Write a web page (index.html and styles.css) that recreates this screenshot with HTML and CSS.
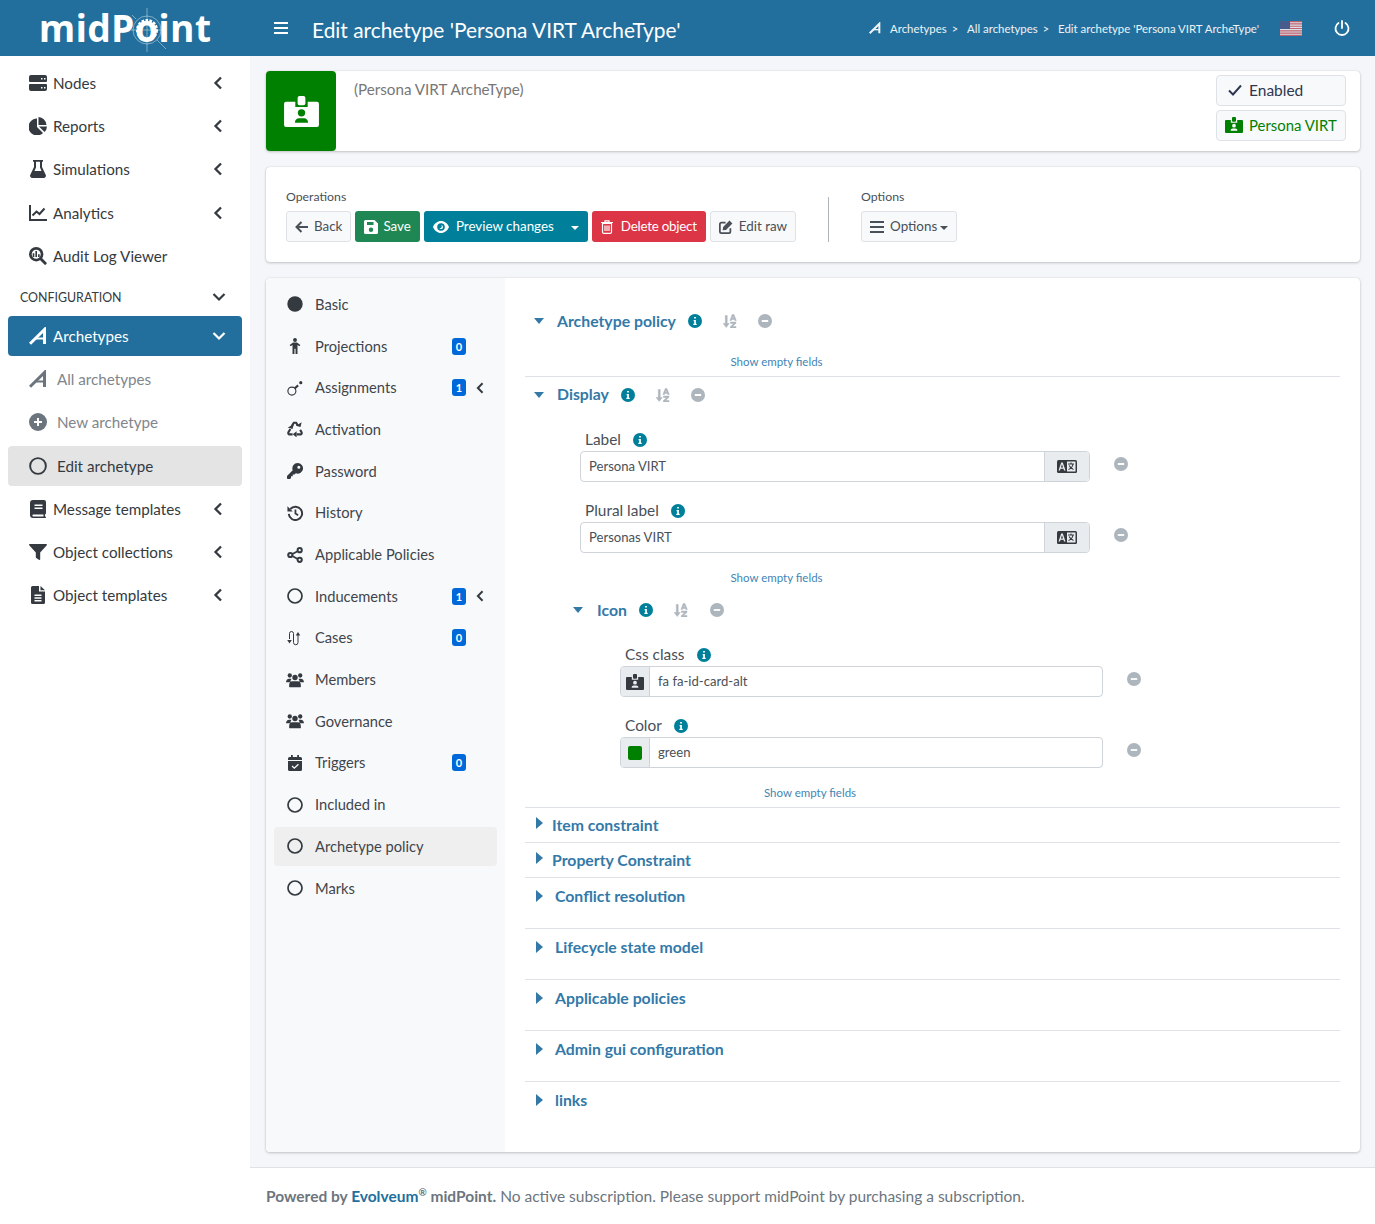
FILE: index.html
```html
<!DOCTYPE html>
<html lang="en">
<head>
  <meta charset="UTF-8" />
  <meta name="viewport" content="width=device-width, initial-scale=1.0">
  <title>Edit archetype</title>
  <link rel="stylesheet" href="styles.css">
</head>
<body>
  <svg class="sprite" xmlns="http://www.w3.org/2000/svg">
    <symbol id="i-server" viewBox="0 0 18 16"><path fill="currentColor" d="M2 0h14a2 2 0 0 1 2 2v4a1 1 0 0 1-1 1H1a1 1 0 0 1-1-1V2a2 2 0 0 1 2-2zm10 3v1.500h1.500V3zm3 0v1.500h1.500V3zM1 9h16a1 1 0 0 1 1 1v4a2 2 0 0 1-2 2H2a2 2 0 0 1-2-2v-4a1 1 0 0 1 1-1zm11 3v1.500h1.500V12zm3 0v1.500h1.500V12z"/></symbol>
    <symbol id="i-pie" viewBox="0 0 18 18"><path fill="currentColor" d="M8 1.500V10l6 6a8.500 8.500 0 1 1-6-14.500zM9.500 0a8.500 8.500 0 0 1 8 8h-8zM10 9.500h8a8 8 0 0 1-2.500 5.500z"/></symbol>
    <symbol id="i-flask" viewBox="0 0 16 18"><path fill="currentColor" d="M3 0h10v1.800h-1V7l3.700 7.700A2.300 2.300 0 0 1 13.600 18H2.400A2.300 2.300 0 0 1 .3 14.700L4 7V1.800H3zm3 1.800V7.500L4.500 11h7L10 7.500V1.800z"/></symbol>
    <symbol id="i-line" viewBox="0 0 18 16"><path fill="none" stroke="currentColor" stroke-width="2" d="M1 0v15h17"/><path fill="none" stroke="currentColor" stroke-width="2" d="M3.500 10.500l4-4 3 2.500 5-5.500"/></symbol>
    <symbol id="i-audit" viewBox="0 0 20 20"><circle cx="8" cy="8" r="6.500" fill="none" stroke="currentColor" stroke-width="3"/><path stroke="currentColor" stroke-width="3.200" stroke-linecap="round" d="M13 13l5 5"/><path stroke="currentColor" stroke-width="1.800" d="M5 7v4M8 4.500V11M11 8v3"/></symbol>
    <symbol id="i-arch" viewBox="0 0 18 18"><path fill="none" stroke="currentColor" stroke-width="3" d="M1 16.800L15.500 2.500V17"/><path fill="none" stroke="currentColor" stroke-width="2" d="M6.500 11.500h9"/></symbol>
    <symbol id="i-plus" viewBox="0 0 18 18"><circle cx="9" cy="9" r="9" fill="currentColor"/><path stroke="#fff" stroke-width="2" d="M9 5v8M5 9h8"/></symbol>
    <symbol id="i-ring" viewBox="0 0 16 16"><circle cx="8" cy="8" r="7" fill="none" stroke="currentColor" stroke-width="1.700"/></symbol>
    <symbol id="i-dot" viewBox="0 0 16 16"><circle cx="8" cy="8" r="7.700" fill="currentColor"/></symbol>
    <symbol id="i-book" viewBox="0 0 16 18"><path fill="currentColor" d="M3 0h11a2 2 0 0 1 2 2v11c0 .8-.5 1.300-1 1.500v1.700c.6.200 1 .7 1 1.300a.500.500 0 0 1-.500.500H3a3 3 0 0 1-3-3V3a3 3 0 0 1 3-3zm1.500 4.500v1.500h8V4.500zm0 3v1.500h8V7.500zM3 14.500a1.300 1.300 0 0 0 0 2h10.500v-2z"/></symbol>
    <symbol id="i-filter" viewBox="0 0 18 16"><path fill="currentColor" d="M.8 0h16.400c.7 0 1 .8.600 1.300L11.200 8.500V15c0 .8-.8 1.200-1.400.8L7.300 14c-.3-.2-.5-.5-.5-.8V8.500L.2 1.300C-.2.800.1 0 .8 0z"/></symbol>
    <symbol id="i-file" viewBox="0 0 14 18"><path fill="currentColor" d="M1.500 0H8v5.500h6v11a1.500 1.500 0 0 1-1.500 1.500h-11A1.500 1.500 0 0 1 0 16.500v-15A1.500 1.500 0 0 1 1.500 0zM9.500 0L14 4.200H9.500zM3.500 8.500V10h7V8.500zm0 2.800v1.500h7v-1.500zm0 2.800v1.500h7v-1.500z"/></symbol>
    <symbol id="i-badge" viewBox="0 0 18 16"><path fill="currentColor" fill-rule="evenodd" d="M1 3h16a1 1 0 0 1 1 1v11a1 1 0 0 1-1 1H1a1 1 0 0 1-1-1V4a1 1 0 0 1 1-1zm4.800 0v2.700h6.400V3zM9 6.800a1.900 1.900 0 1 0 0 3.800 1.900 1.900 0 0 0 0-3.800zM5.600 13.800h6.800c0-1.400-1-2.300-2-2.300H7.600c-1 0-2 .9-2 2.300z"/><rect x="7" y="0" width="4" height="4.800" rx="1" fill="currentColor"/></symbol>
    <symbol id="i-person" viewBox="0 0 12 18"><circle cx="6" cy="2.200" r="2.200" fill="currentColor"/><path fill="currentColor" d="M3.800 5h4.400l3.800 3-1 1.200-2.200-1.400V18H6.600v-6H5.400v6H3.200V7.800L1 9.200 0 8z"/></symbol>
    <symbol id="i-assign" viewBox="0 0 18 18"><circle cx="5.500" cy="12.500" r="4.500" fill="none" stroke="currentColor" stroke-width="1.300"/><path stroke="currentColor" stroke-width="2.400" d="M8.500 9.500l4-3.500"/><circle cx="15.500" cy="3" r="1.800" fill="currentColor"/></symbol>
    <symbol id="i-recycle" viewBox="0 0 18 18"><path fill="none" stroke="currentColor" stroke-width="2.400" d="M5.300 5.800L7.700 2h2.600l1.600 2.600M3.800 9L1.600 12.700c-.6 1.100.1 2.300 1.300 2.300h3.400M10.800 15h4.300c1.200 0 1.900-1.200 1.300-2.300l-1.600-2.700"/><path fill="currentColor" d="M9.800 5.300l5.400 1.500 1.300-5.300zM.8 7.300l5.400 1.600L7.700 3.600zM10.800 11.500v7L6.500 15z"/></symbol>
    <symbol id="i-key" viewBox="0 0 18 18"><path fill="currentColor" fill-rule="evenodd" d="M12 0a6 6 0 1 1-2.100 11.600L8.500 13H6.500v2h-2v2l-1 1H.8a.8.800 0 0 1-.8-.8v-2.600l6.400-6.500A6 6 0 0 1 12 0zm1.300 3a1.700 1.700 0 1 0 0 3.400 1.700 1.700 0 0 0 0-3.400z"/></symbol>
    <symbol id="i-history" viewBox="0 0 18 18"><path fill="none" stroke="currentColor" stroke-width="2.200" d="M3.800 4.500A7.500 7.500 0 1 1 2 10"/><path fill="currentColor" d="M.5 1.500L6.500 7.300H.5z"/><path fill="none" stroke="currentColor" stroke-width="2" d="M9.500 5v4.500l3 2"/></symbol>
    <symbol id="i-share" viewBox="0 0 16 16"><path stroke="currentColor" stroke-width="1.800" d="M3.500 8l9-4.800M3.500 8l9 5"/><circle cx="3.300" cy="8" r="2.100" fill="#f8f9fa" stroke="currentColor" stroke-width="2"/><circle cx="12.700" cy="3.200" r="2.100" fill="#f8f9fa" stroke="currentColor" stroke-width="2"/><circle cx="12.700" cy="12.800" r="2.100" fill="#f8f9fa" stroke="currentColor" stroke-width="2"/></symbol>
    <symbol id="i-cases" viewBox="0 0 16 16"><path fill="none" stroke="currentColor" stroke-width="1" d="M2.500 9V3.500a2 2 0 0 1 4 0v9a2.200 2.200 0 0 0 4.500 0V5"/><path fill="currentColor" d="M.2 10h4.600l-2.300 3.500zM8.700 5.500h4.600L11 2z"/></symbol>
    <symbol id="i-users" viewBox="0 0 20 16"><circle cx="4.200" cy="3" r="2.400" fill="currentColor"/><circle cx="15.800" cy="3" r="2.400" fill="currentColor"/><circle cx="10" cy="5.200" r="3" fill="currentColor"/><path fill="currentColor" d="M0 10.500C0 8.200 1.500 6.500 3.500 6.500H5c.4 0 .8.100 1 .3a5 5 0 0 0-1 3.700H1zM15 10.500a5 5 0 0 0-1-3.700c.3-.2.700-.3 1-.3h1.500c2 0 3.500 1.700 3.500 4H15zM7 9.500h6c2 0 3.500 1.800 3.500 4v2c0 .3-.2.500-.5.500H4c-.3 0-.5-.2-.5-.5v-2c0-2.200 1.500-4 3.500-4z"/></symbol>
    <symbol id="i-cal" viewBox="0 0 14 16"><path fill="currentColor" fill-rule="evenodd" d="M3 0h1.800v2h4.400V0H11v2h1.500A1.500 1.500 0 0 1 14 3.500V5H0V3.500A1.500 1.500 0 0 1 1.500 2H3zM0 6h14v8.500a1.500 1.500 0 0 1-1.500 1.500h-11A1.500 1.500 0 0 1 0 14.500zm10 2.800L6.300 12.300 4.500 10.600l-.9.900 2.700 2.600 4.600-4.400z"/></symbol>
    <symbol id="i-left" viewBox="0 0 14 14"><path fill="none" stroke="currentColor" stroke-width="2" d="M13 7H2M6.500 2L1.500 7l5 5"/></symbol>
    <symbol id="i-save" viewBox="0 0 14 14"><path fill="currentColor" fill-rule="evenodd" d="M1.500 0h9L14 3.500V12.500a1.500 1.500 0 0 1-1.500 1.500h-11A1.500 1.500 0 0 1 0 12.500v-11A1.500 1.500 0 0 1 1.500 0zM3 2v3h6.500V2zm4 5.500a2.200 2.200 0 1 0 0 4.400 2.200 2.200 0 0 0 0-4.400z"/></symbol>
    <symbol id="i-eye" viewBox="0 0 16 12"><path fill="currentColor" fill-rule="evenodd" d="M8 0c3.600 0 6.600 2.400 8 6-1.400 3.600-4.400 6-8 6S1.400 9.600 0 6c1.400-3.600 4.400-6 8-6zm0 2.200a3.800 3.800 0 1 0 0 7.600 3.800 3.800 0 0 0 0-7.600zM8 4a2 2 0 1 1-1.800 2.900A1.500 1.500 0 0 0 8 4z"/></symbol>
    <symbol id="i-trash" viewBox="0 0 12 14"><path fill="none" stroke="currentColor" stroke-width="1.200" d="M1.500 3.500h9V12a1.300 1.300 0 0 1-1.300 1.300H2.800A1.300 1.300 0 0 1 1.500 12zM0 2.500h12M4 2.300V.8h4v1.500M4 5.500v5.500M6 5.500v5.500M8 5.500v5.500"/></symbol>
    <symbol id="i-edit" viewBox="0 0 16 16"><path fill="none" stroke="currentColor" stroke-width="2" d="M13 9.500v4a1.500 1.500 0 0 1-1.500 1.500h-9A1.500 1.500 0 0 1 1 13.500v-9A1.500 1.500 0 0 1 2.500 3h5"/><path fill="currentColor" d="M12 .7l3.300 3.300L8 11.300l-3.800.5.500-3.800z"/></symbol>
    <symbol id="i-bars" viewBox="0 0 14 12"><path stroke="currentColor" stroke-width="1.800" d="M0 1h14M0 6h14M0 11h14"/></symbol>
    <symbol id="i-check" viewBox="0 0 14 12"><path fill="none" stroke="currentColor" stroke-width="1.900" d="M1 6.500l4 4 8-9"/></symbol>
    <symbol id="i-info" viewBox="0 0 14 14"><circle cx="7" cy="7" r="7" fill="#007f9b"/><path fill="#fff" d="M6.100 2.900h1.800v1.600H6.100zM5.600 6h2.300v3.700h.8V11H5.300V9.700h.9V7.300h-.6z"/></symbol>
    <symbol id="i-minus" viewBox="0 0 14 14"><circle cx="7" cy="7" r="7" fill="#adb5bd"/><path stroke="#fff" stroke-width="1.800" d="M3.800 7h6.400"/></symbol>
    <symbol id="i-sort" viewBox="0 0 14 14"><path fill="#adb5bd" stroke="#adb5bd" stroke-width=".5" d="M2.300 1.500h1.900v8H6.200L3.200 13.500 .2 9.500h2.100zM9.300 0.500h1.600L13.300 6.500h-1.500l-.4-1H8.800l-.4 1H6.900zM9.300 4.300h1.600l-.8-2zM7.500 8h5.500v1.300l-3.500 3.200H13V14H7.300v-1.300l3.500-3.200H7.500z"/></symbol>
    <symbol id="i-lang" viewBox="0 0 20 13"><rect width="20" height="13" rx="1.500" fill="currentColor"/><rect x="10" y="1.500" width="8.500" height="10" fill="#e9ecef"/><path fill="#e9ecef" d="M4.200 2.500h1.600l2.700 8H7l-.5-1.700H3.500L3 10.500H1.500zM3.900 7.500h2.200L5 4.300z"/><path fill="none" stroke="currentColor" stroke-width="1.100" d="M11 4h6M14 2.500V4M16 4c-.5 3-2.500 4.800-4.500 5.500M12.200 5.500c.7 1.800 2.300 3.300 4.300 4"/></symbol>
    <symbol id="i-power" viewBox="0 0 16 16"><path fill="none" stroke="currentColor" stroke-width="1.800" stroke-linecap="round" d="M8 1v7M4.500 3A6.500 6.500 0 1 0 11.500 3"/></symbol>
  </svg>

  <header class="topbar">
    <div class="brand">
      <span class="brand-text">midPoint</span>
      <svg class="brand-gear" viewBox="0 0 48 48">
        <circle cx="24" cy="24" r="9" fill="none" stroke="#fff" stroke-width="4" stroke-dasharray="2.500 1.200"/>
        <circle cx="24" cy="24" r="14" fill="none" stroke="#fff" stroke-width=".6" opacity=".7"/>
        <path stroke="#fff" stroke-width=".6" opacity=".7" d="M24 2v44M8 24h32M34 34l9 9M13 13l-4-4"/>
      </svg>
    </div>
    <svg class="burger"><use href="#i-bars"/></svg>
    <h1 class="page-title">Edit archetype 'Persona VIRT ArcheType'</h1>
    <nav class="crumbs">
      <svg class="crumb-icon"><use href="#i-arch"/></svg>
      <span>Archetypes</span><span class="crumb-sep">&gt;</span>
      <span>All archetypes</span><span class="crumb-sep">&gt;</span>
      <span>Edit archetype 'Persona VIRT ArcheType'</span>
    </nav>
    <svg class="flag" viewBox="0 0 22 15">
      <rect width="22" height="15" fill="#e6e6ea"/>
      <path stroke="#c9616d" stroke-width="1.150" d="M0 .6h22M0 2.900h22M0 5.200h22M0 7.500h22M0 9.800h22M0 12.100h22M0 14.400h22"/>
      <rect width="10" height="8" fill="#4a5a8c"/>
    </svg>
    <svg class="power"><use href="#i-power"/></svg>
  </header>

  <div class="wrap">
    <aside class="sidebar">
      <a class="nav-item"><svg class="nav-icon"><use href="#i-server"/></svg><span class="nav-text">Nodes</span><svg class="chev" viewBox="0 0 10 14"><path d="M8 1.500L2.500 7 8 12.500"/></svg></a>
      <a class="nav-item"><svg class="nav-icon"><use href="#i-pie"/></svg><span class="nav-text">Reports</span><svg class="chev" viewBox="0 0 10 14"><path d="M8 1.500L2.500 7 8 12.500"/></svg></a>
      <a class="nav-item"><svg class="nav-icon"><use href="#i-flask"/></svg><span class="nav-text">Simulations</span><svg class="chev" viewBox="0 0 10 14"><path d="M8 1.500L2.500 7 8 12.500"/></svg></a>
      <a class="nav-item"><svg class="nav-icon"><use href="#i-line"/></svg><span class="nav-text">Analytics</span><svg class="chev" viewBox="0 0 10 14"><path d="M8 1.500L2.500 7 8 12.500"/></svg></a>
      <a class="nav-item"><svg class="nav-icon"><use href="#i-audit"/></svg><span class="nav-text">Audit Log Viewer</span></a>
      <div class="nav-header"><span>CONFIGURATION</span><svg class="chev-down" viewBox="0 0 14 10"><path d="M1.500 2L7 7.500 12.500 2"/></svg></div>
      <a class="nav-item active"><svg class="nav-icon"><use href="#i-arch"/></svg><span class="nav-text">Archetypes</span><svg class="chev-down" viewBox="0 0 14 10"><path d="M1.500 2L7 7.500 12.500 2"/></svg></a>
      <a class="nav-item sub muted"><svg class="nav-icon"><use href="#i-arch"/></svg><span class="nav-text">All archetypes</span></a>
      <a class="nav-item sub muted"><svg class="nav-icon"><use href="#i-plus"/></svg><span class="nav-text">New archetype</span></a>
      <a class="nav-item sub current"><svg class="nav-icon"><use href="#i-ring"/></svg><span class="nav-text">Edit archetype</span></a>
      <a class="nav-item"><svg class="nav-icon"><use href="#i-book"/></svg><span class="nav-text">Message templates</span><svg class="chev" viewBox="0 0 10 14"><path d="M8 1.500L2.500 7 8 12.500"/></svg></a>
      <a class="nav-item"><svg class="nav-icon"><use href="#i-filter"/></svg><span class="nav-text">Object collections</span><svg class="chev" viewBox="0 0 10 14"><path d="M8 1.500L2.500 7 8 12.500"/></svg></a>
      <a class="nav-item"><svg class="nav-icon"><use href="#i-file"/></svg><span class="nav-text">Object templates</span><svg class="chev" viewBox="0 0 10 14"><path d="M8 1.500L2.500 7 8 12.500"/></svg></a>
    </aside>

    <div class="main">
      <main class="content">
        <section class="card summary">
          <div class="summary-icon"><svg class="summary-badge"><use href="#i-badge"/></svg></div>
          <div class="summary-name">(Persona VIRT ArcheType)</div>
          <div class="summary-tags">
            <div class="tag"><svg class="tag-icon"><use href="#i-check"/></svg>Enabled</div>
            <div class="tag tag-green"><svg class="tag-icon tag-badge"><use href="#i-badge"/></svg>Persona VIRT</div>
          </div>
        </section>

        <section class="card ops">
          <div class="ops-group">
            <div class="ops-label">Operations</div>
            <div class="ops-buttons">
              <button class="btn btn-light"><svg class="btn-icon"><use href="#i-left"/></svg>Back</button>
              <button class="btn btn-green"><svg class="btn-icon"><use href="#i-save"/></svg>Save</button>
              <button class="btn btn-teal"><svg class="btn-icon btn-eye"><use href="#i-eye"/></svg>Preview changes<span class="caret-down"></span></button>
              <button class="btn btn-red"><svg class="btn-icon"><use href="#i-trash"/></svg>Delete object</button>
              <button class="btn btn-light"><svg class="btn-icon"><use href="#i-edit"/></svg>Edit raw</button>
            </div>
          </div>
          <div class="ops-divider"></div>
          <div class="ops-group">
            <div class="ops-label">Options</div>
            <div class="ops-buttons">
              <button class="btn btn-light"><svg class="btn-icon"><use href="#i-bars"/></svg>Options<span class="caret-small"></span></button>
            </div>
          </div>
        </section>

        <section class="card detail">
          <ul class="tabs">
            <li class="tab"><svg class="tab-icon"><use href="#i-dot"/></svg><span class="tab-text">Basic</span></li>
            <li class="tab"><svg class="tab-icon"><use href="#i-person"/></svg><span class="tab-text">Projections</span><span class="count">0</span></li>
            <li class="tab"><svg class="tab-icon"><use href="#i-assign"/></svg><span class="tab-text">Assignments</span><span class="count">1</span><svg class="tab-chev" viewBox="0 0 10 14"><path d="M8 1.500L2.500 7 8 12.500"/></svg></li>
            <li class="tab"><svg class="tab-icon"><use href="#i-recycle"/></svg><span class="tab-text">Activation</span></li>
            <li class="tab"><svg class="tab-icon"><use href="#i-key"/></svg><span class="tab-text">Password</span></li>
            <li class="tab"><svg class="tab-icon"><use href="#i-history"/></svg><span class="tab-text">History</span></li>
            <li class="tab"><svg class="tab-icon"><use href="#i-share"/></svg><span class="tab-text">Applicable Policies</span></li>
            <li class="tab"><svg class="tab-icon"><use href="#i-ring"/></svg><span class="tab-text">Inducements</span><span class="count">1</span><svg class="tab-chev" viewBox="0 0 10 14"><path d="M8 1.500L2.500 7 8 12.500"/></svg></li>
            <li class="tab"><svg class="tab-icon"><use href="#i-cases"/></svg><span class="tab-text">Cases</span><span class="count">0</span></li>
            <li class="tab"><svg class="tab-icon"><use href="#i-users"/></svg><span class="tab-text">Members</span></li>
            <li class="tab"><svg class="tab-icon"><use href="#i-users"/></svg><span class="tab-text">Governance</span></li>
            <li class="tab"><svg class="tab-icon"><use href="#i-cal"/></svg><span class="tab-text">Triggers</span><span class="count">0</span></li>
            <li class="tab"><svg class="tab-icon"><use href="#i-ring"/></svg><span class="tab-text">Included in</span></li>
            <li class="tab selected"><svg class="tab-icon"><use href="#i-ring"/></svg><span class="tab-text">Archetype policy</span></li>
            <li class="tab"><svg class="tab-icon"><use href="#i-ring"/></svg><span class="tab-text">Marks</span></li>
          </ul>

          <div class="form">
            <div class="sec-head first">
              <span class="tri-down"></span><span class="sec-title">Archetype policy</span>
              <svg class="sec-info"><use href="#i-info"/></svg><svg class="sec-tool"><use href="#i-sort"/></svg><svg class="sec-tool"><use href="#i-minus"/></svg>
            </div>
            <a class="show-empty top">Show empty fields</a>

            <div class="sec-head display">
              <span class="tri-down"></span><span class="sec-title">Display</span>
              <svg class="sec-info"><use href="#i-info"/></svg><svg class="sec-tool"><use href="#i-sort"/></svg><svg class="sec-tool"><use href="#i-minus"/></svg>
            </div>

            <div class="fields">
              <div class="field">
                <div class="field-label">Label<svg class="field-info"><use href="#i-info"/></svg></div>
                <div class="field-row">
                  <div class="input-group wide">
                    <div class="input-value">Persona VIRT</div>
                    <div class="addon addon-lang"><svg class="lang"><use href="#i-lang"/></svg></div>
                  </div>
                  <svg class="field-minus"><use href="#i-minus"/></svg>
                </div>
              </div>
              <div class="field">
                <div class="field-label">Plural label<svg class="field-info"><use href="#i-info"/></svg></div>
                <div class="field-row">
                  <div class="input-group wide">
                    <div class="input-value">Personas VIRT</div>
                    <div class="addon addon-lang"><svg class="lang"><use href="#i-lang"/></svg></div>
                  </div>
                  <svg class="field-minus"><use href="#i-minus"/></svg>
                </div>
              </div>
            </div>
            <a class="show-empty top mid">Show empty fields</a>

            <div class="sec-head nested">
              <span class="tri-down"></span><span class="sec-title">Icon</span>
              <svg class="sec-info"><use href="#i-info"/></svg><svg class="sec-tool"><use href="#i-sort"/></svg><svg class="sec-tool"><use href="#i-minus"/></svg>
            </div>

            <div class="fields inner">
              <div class="field">
                <div class="field-label">Css class<svg class="field-info"><use href="#i-info"/></svg></div>
                <div class="field-row">
                  <div class="input-group narrow">
                    <div class="addon addon-pre"><svg class="pre-badge"><use href="#i-badge"/></svg></div>
                    <div class="input-value">fa fa-id-card-alt</div>
                  </div>
                  <svg class="field-minus"><use href="#i-minus"/></svg>
                </div>
              </div>
              <div class="field">
                <div class="field-label">Color<svg class="field-info"><use href="#i-info"/></svg></div>
                <div class="field-row">
                  <div class="input-group narrow">
                    <div class="addon addon-pre"><span class="swatch"></span></div>
                    <div class="input-value">green</div>
                  </div>
                  <svg class="field-minus"><use href="#i-minus"/></svg>
                </div>
              </div>
            </div>
            <a class="show-empty inner-show">Show empty fields</a>

            <div class="fold small"><span class="tri-right"></span><span class="sec-title">Item constraint</span></div>
            <div class="fold small"><span class="tri-right"></span><span class="sec-title">Property Constraint</span></div>
            <div class="fold"><span class="tri-right"></span><span class="sec-title">Conflict resolution</span></div>
            <div class="fold"><span class="tri-right"></span><span class="sec-title">Lifecycle state model</span></div>
            <div class="fold"><span class="tri-right"></span><span class="sec-title">Applicable policies</span></div>
            <div class="fold"><span class="tri-right"></span><span class="sec-title">Admin gui configuration</span></div>
            <div class="fold"><span class="tri-right"></span><span class="sec-title">links</span></div>
          </div>
        </section>
      </main>
      <footer class="footer"><strong>Powered by <a class="footer-link">Evolveum</a><sup>®</sup> midPoint.</strong> No active subscription. Please support midPoint by purchasing a subscription.</footer>
    </div>
  </div>
</body>
</html>
```

FILE: styles.css
```css
* { box-sizing: border-box; }
body { margin: 0; font-family: Lato, "Noto Sans", sans-serif; font-size: 15.2px; color: #343a40; background: #f4f6f9; height: 1224px; overflow: hidden; }
svg { flex: none; }
.sprite { display: none; }

/* top bar */
.topbar { display: flex; align-items: center; height: 56px; background: #226f9d; color: #fff; }
.brand { position: relative; width: 250px; padding-left: 39px; flex: none; height: 56px; }
.brand-text { display: block; font-family: "Noto Sans", sans-serif; font-weight: 700; font-size: 37px; line-height: 56px; letter-spacing: .6px; }
.brand-gear { position: absolute; left: 123px; top: 6px; width: 48px; height: 48px; }
.burger { width: 14px; height: 12px; margin-left: 24px; }
.page-title { margin: 2px 0 0 24px; font-size: 20.9px; font-weight: 400; }
.crumbs { display: flex; align-items: center; margin-left: auto; font-size: 11.4px; color: #eef3f7; }
.crumb-icon { width: 12px; height: 12px; margin-right: 9px; }
.crumb-sep { margin: 0 9px 0 5px; font-size: 11px; }
.flag { width: 22px; height: 15px; margin-left: 21px; opacity: .95; }
.power { width: 16px; height: 16px; margin: 0 25px 0 32px; }

/* sidebar */
.wrap { display: flex; height: 1168px; }
.sidebar { width: 250px; flex: none; padding: 7px 8px 0; background: #fff; }
.nav-item { display: flex; align-items: center; height: 40px; margin-bottom: 3.2px; padding-left: 21px; border-radius: 4px; }
.nav-icon { width: 18px; height: 18px; margin-right: 6px; color: #343a40; }
.nav-text { flex: 1; }
.chev { width: 10px; height: 14px; margin-right: 19px; fill: none; stroke: #343a40; stroke-width: 2.300; }
.chev-down { width: 14px; height: 10px; margin-right: 16px; fill: none; stroke: currentColor; stroke-width: 2.200; }
.nav-header { display: flex; align-items: center; justify-content: space-between; height: 37px; padding: 0 0 0 12px; font-size: 12.4px; margin-bottom: 0; }
.nav-item.active { background: #226f9d; color: #fff; }
.active .nav-icon { color: #fff; }
.sub .nav-icon { margin-right: 10px; }
.muted { color: #80868c; }
.muted .nav-icon { color: #6c757d; }
.current { background: #e4e4e4; }

/* cards */
.main { flex: 1; display: flex; flex-direction: column; min-width: 0; }
.content { flex: 1; padding: 15px 15px 0 16px; }
.card { background: #fff; border-radius: 4px; box-shadow: 0 0 1px rgba(0,0,0,.2), 0 1px 3px rgba(0,0,0,.2); }
.summary { display: flex; height: 80px; margin-bottom: 16px; }
.summary-icon { display: flex; align-items: center; justify-content: center; width: 70px; background: #008000; border-radius: 4px; }
.summary-badge { width: 35px; height: 31px; color: #fff; }
.summary-name { flex: 1; padding: 9px 18px; color: #777; }
.summary-tags { display: flex; flex-direction: column; gap: 4px; padding: 4px 14px 0 0; }
.tag { display: flex; align-items: center; width: 130px; height: 31px; padding: 0 0 2px 11px; background: #f8f9fa; border: 1px solid #dee2e6; border-radius: 4px; font-size: 15.5px; color: #2e3650; }
.tag-icon { width: 14px; height: 12px; margin-right: 7px; }
.tag-green { color: #008000; padding-left: 8px; font-size: 14.9px; }
.tag-badge { width: 18px; height: 16px; margin-right: 6px; }

.ops { display: flex; align-items: flex-start; height: 95px; padding: 21px 20px 0; margin-bottom: 16px; }
.ops-label { font-size: 12.3px; line-height: 17px; margin-bottom: 6px; color: #495057; }
.ops-buttons { display: flex; gap: 4px; }
.ops-divider { width: 1px; height: 45px; margin: 9px 32px 0; background: #adb5bd; }
.btn { display: flex; align-items: center; height: 31px; padding: 0 8px 2px; border: 1px solid transparent; border-radius: 3px; font: inherit; font-size: 13.4px; color: #fff; }
.btn-icon { width: 14px; height: 14px; margin-right: 5px; margin-top: 2px; }
.btn-light { background: #f8f9fa; border-color: #dee2e6; color: #495057; }
.btn-light:last-child .btn-icon { margin-right: 6px; }
.btn-green { background: #1e8754; }
.btn-teal { background: #007f9b; }
.btn-red { background: #dc3545; letter-spacing: -.25px; }
.btn-red .btn-icon { width: 12px; margin-right: 8px; }
.btn-eye { width: 16px; height: 12px; margin-right: 7px; }
.caret-down { margin: 4px 0 0 17px; border: 4.5px solid transparent; border-top-color: #fff; border-bottom: 0; }
.caret-small { margin: 4px 0 0 3px; border: 4px solid transparent; border-top-color: #495057; border-bottom: 0; }

/* tabs column */
.detail { display: flex; height: 874px; overflow: hidden; }
.tabs { display: flex; flex-direction: column; gap: 2.7px; width: 239px; flex: none; margin: 0; padding: 6.9px 8px 0; list-style: none; background: #f8f9fa; }
.tab { display: flex; align-items: center; height: 39px; padding-left: 12px; border-radius: 4px; font-size: 14.7px; color: #3f454c; }
.tab-icon { width: 18px; height: 16px; margin-right: 11px; color: #343a40; }
.tab-text { width: 137px; flex: none; padding-bottom: 1px; }
.selected { background: #efefef; }
.count { display: flex; align-items: center; justify-content: center; width: 14px; height: 17px; background: #0069d9; border-radius: 3px; color: #fff; font-size: 11px; font-weight: 700; }
.tab-chev { width: 10px; height: 12px; margin-left: 9px; fill: none; stroke: #343a40; stroke-width: 2.300; }

/* form column */
.form { flex: 1; padding: 31px 20px 0; }
.sec-head { display: flex; align-items: center; height: 24px; padding-left: 9px; }
.sec-title { font-weight: 700; font-size: 15.8px; color: #3379a8; padding-bottom: 2px; }
.tri-down { width: 0; height: 0; margin-right: 13px; border: 5.5px solid transparent; border-top: 6px solid #3379a8; border-bottom: 0; }
.tri-right { width: 0; height: 0; margin-right: 12px; border: 6px solid transparent; border-left: 7px solid #3379a8; border-right: 0; }
.sec-info { width: 14px; height: 14px; margin-left: 12px; }
.sec-tool { width: 14px; height: 14px; margin-left: 21px; }
.show-empty { display: block; font-size: 11.5px; line-height: 16px; color: #3f86b5; text-align: center; }
.show-empty.top { width: 503px; margin-top: 21px; padding-bottom: 6px; }
.show-empty.mid { margin-top: 17px; padding-bottom: 0; }
.inner-show { width: 570px; margin-top: 17px; }
.display { margin-top: 0; border-top: 1px solid #dee2e6; height: 36px; padding-top: 0; }
.nested { margin-top: 12px; padding-left: 48px; }
.nested .sec-title { margin-left: 1px; }
.nested .sec-tool:last-child { margin-left: 22px; }
.fields { padding-left: 55px; margin-top: 18px; }
.inner { padding-left: 95px; margin-top: 23px; }
.field { margin-bottom: 19px; }
.field:last-child { margin-bottom: 0; }
.field-label { display: flex; align-items: center; height: 20px; margin-bottom: 1px; padding: 0 0 2px 5px; font-size: 15.4px; color: #495057; }
.field-info { width: 14px; height: 14px; margin: 2px 0 0 12px; }
.field-row { display: flex; align-items: center; }
.input-group { display: flex; height: 31px; border: 1px solid #ced4da; border-radius: 4px; overflow: hidden; background: #fff; }
.wide { width: 510px; }
.narrow { width: 483px; }
.input-value { flex: 1; padding-left: 8px; font-size: 13.1px; line-height: 29px; color: #495057; }
.addon { display: flex; align-items: center; justify-content: center; background: #e9ecef; }
.addon-lang { width: 45px; border-left: 1px solid #ced4da; color: #343a40; }
.addon-pre { width: 29px; border-right: 1px solid #ced4da; color: #343a40; }
.lang { width: 20px; height: 13px; }
.pre-badge { width: 18px; height: 16px; }
.swatch { width: 14px; height: 14px; background: #008000; border-radius: 2px; }
.field-minus { width: 14px; height: 14px; margin-left: 24px; position: relative; top: -3px; }
.fold { display: flex; align-items: flex-start; height: 51px; padding: 6px 0 0 11px; border-top: 1px solid #dee2e6; line-height: 24px; }
.fold .tri-right { margin: 6px 12px 0 0; }
.small { height: 35px; padding-top: 5px; }
.small .tri-right { margin: 4px 9px 0 0; }
.inner-show + .fold { margin-top: 6px; }

.footer { height: 57px; padding: 19px 16px 0; background: #fff; border-top: 1px solid #dee2e6; color: #6c757d; font-size: 15.5px; }
.footer strong { color: #6c757d; }
.footer-link { color: #226f9d; }
.footer sup { font-size: 10px; line-height: 0; }
```
